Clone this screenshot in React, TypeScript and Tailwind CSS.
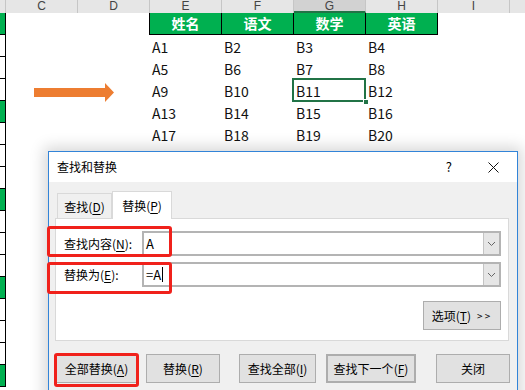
import React from "react";

const COLS = ["C", "D", "E", "F", "G", "H", "I"];
const HEAD = ["姓名", "语文", "数学", "英语"];
const DATA = [
  ["A1", "B2", "B3", "B4"],
  ["A5", "B6", "B7", "B8"],
  ["A9", "B10", "B11", "B12"],
  ["A13", "B14", "B15", "B16"],
  ["A17", "B18", "B19", "B20"],
];
const ROWS = 17;

function Key({ k }: { k: string }) {
  return (
    <>
      (<span className="underline underline-offset-2">{k}</span>)
    </>
  );
}

function Chevron() {
  return (
    <svg width="9" height="6" viewBox="0 0 9 6">
      <path d="M1 1 L4.5 4.5 L8 1" fill="none" stroke="#666" strokeWidth="1" />
    </svg>
  );
}

function ComboBox({ children }: { children?: React.ReactNode }) {
  return (
    <div className="flex h-[25px] flex-1 border-2 border-[#b4b4b4] bg-white">
      <div className="flex flex-1 items-center pl-[2px] text-[13px]">{children}</div>
      <div className="flex w-[16px] items-center justify-center border-l border-[#c4c4c4] bg-[#e6e6e6]">
        <Chevron />
      </div>
    </div>
  );
}

function Btn({ children, className = "" }: { children: React.ReactNode; className?: string }) {
  return (
    <div
      className={`flex h-[29px] shrink-0 items-center justify-center border border-[#adadad] bg-[#e1e1e1] ${className}`}
    >
      {children}
    </div>
  );
}

export default function App() {
  return (
    <div className="relative h-[390px] w-[525px] overflow-hidden bg-white font-['Noto_Sans_CJK_SC','Noto_Sans',sans-serif] text-black">
      {/* column letters */}
      <div className="flex h-[13px] bg-[#e6e6e6] font-['Liberation_Sans',sans-serif] text-[12px] leading-[12px] text-[#444]">
        <div className="w-[6px] shrink-0 border-r border-[#c6c6c6]" />
        {COLS.map((c) => (
          <div
            key={c}
            className={`w-[72px] shrink-0 border-r border-[#c6c6c6] text-center ${
              c === "G" ? "border-b-2 border-b-[#217346] bg-[#d2d2d2]" : ""
            }`}
          >
            {c}
          </div>
        ))}
        <div className="flex-1" />
      </div>

      {/* rows */}
      {Array.from({ length: ROWS }).map((_, i) => (
        <div key={i} className="flex h-[22px]">
          <div
            className={`w-[6px] shrink-0 border-r border-b border-black ${
              i % 4 === 0 ? "bg-[#00b050]" : "bg-white"
            }`}
          />
          <div className="w-[72px] shrink-0" />
          <div className={`w-[72px] shrink-0 ${i === 0 ? "border-r border-black" : ""}`} />
          {i === 0
            ? HEAD.map((h) => (
                <div
                  key={h}
                  className="flex w-[72px] shrink-0 items-center justify-center border-r border-b border-black bg-[#00b050] text-[14px] font-bold text-white"
                >
                  {h}
                </div>
              ))
            : (DATA[i - 1] ?? ["", "", "", ""]).map((v, j) => (
                <div
                  key={j}
                  className="flex w-[72px] shrink-0 items-center pl-[2px] pt-[3px] text-[14px] text-[#111]"
                >
                  {v}
                </div>
              ))}
        </div>
      ))}

      {/* selected cell G */}
      <div className="absolute left-[292px] top-[78px] h-[24px] w-[74px] border-2 border-[#217346]" />
      <div className="absolute left-[363px] top-[99px] h-[6px] w-[6px] border border-white bg-[#217346]" />

      {/* orange arrow */}
      <svg className="absolute left-[34px] top-[83px]" width="81" height="20" viewBox="0 0 81 20">
        <rect x="0" y="5" width="72" height="9" fill="#ed7d31" />
        <polygon points="71,0 80,9.5 71,19" fill="#ed7d31" />
      </svg>

      {/* dialog */}
      <div className="absolute left-[48px] top-[151px] h-[250px] w-[470px] border border-[#3284d8] bg-[#f0f0f0] text-[12px] shadow-[0_0_14px_4px_rgba(0,0,0,0.16)]">
        <div className="flex h-[30px] items-center bg-white pl-[8px]">
          <span>查找和替换</span>
          <span className="ml-auto mr-[36px] text-[13px]">?</span>
          <svg className="mr-[18px]" width="11" height="11" viewBox="0 0 11 11">
            <path d="M0.5 0.5 L10.5 10.5 M10.5 0.5 L0.5 10.5" stroke="#111" strokeWidth="1" />
          </svg>
        </div>

        <div className="px-[6px] pt-[9px]">
          {/* tabs */}
          <div className="flex h-[28px] items-end pl-[2px]">
            <div className="flex h-[26px] w-[55px] items-center justify-center border border-b-0 border-[#d9d9d9]">
              查找<Key k="D" />
            </div>
            <div className="relative z-10 flex h-[28px] w-[60px] items-center justify-center border border-b-0 border-[#d9d9d9] bg-white">
              替换<Key k="P" />
            </div>
          </div>

          {/* panel */}
          <div className="-mt-px flex h-[123px] w-[454px] flex-col border border-[#d9d9d9] bg-white pl-[8px] pr-[7px] pt-[12px]">
            <div className="flex items-center">
              <div className="w-[78px]">
                查找内容<Key k="N" />:
              </div>
              <ComboBox>A</ComboBox>
            </div>
            <div className="mt-[6px] flex items-center">
              <div className="w-[78px]">
                替换为<Key k="E" />:
              </div>
              <ComboBox>
                =A<span className="ml-[1px] inline-block h-[15px] w-px bg-black" />
              </ComboBox>
            </div>
            <Btn className="mt-[14px] h-[28px] w-[78px] self-end">
              选项<Key k="T" />
              <span className="ml-[6px] text-[10px] tracking-[2px]">&gt;&gt;</span>
            </Btn>
          </div>

          {/* bottom buttons */}
          <div className="mt-[13px] flex">
            <Btn className="ml-[1px] w-[81px]">
              全部替换<Key k="A" />
            </Btn>
            <Btn className="ml-[9px] w-[74px]">
              替换<Key k="R" />
            </Btn>
            <Btn className="ml-[19px] w-[77px]">
              查找全部<Key k="I" />
            </Btn>
            <Btn className="ml-[10px] w-[90px] border-2 border-[#0078d7]">
              查找下一个<Key k="F" />
            </Btn>
            <Btn className="ml-[20px] w-[74px]">关闭</Btn>
          </div>
        </div>
      </div>

      {/* red highlight boxes */}
      <div className="absolute left-[47px] top-[226px] h-[31px] w-[125px] rounded-[3px] border-[3px] border-[#f0211b]" />
      <div className="absolute left-[47px] top-[262px] h-[32px] w-[125px] rounded-[3px] border-[3px] border-[#f0211b]" />
      <div className="absolute left-[54px] top-[353px] h-[34px] w-[85px] rounded-[3px] border-[3px] border-[#f0211b]" />
    </div>
  );
}
